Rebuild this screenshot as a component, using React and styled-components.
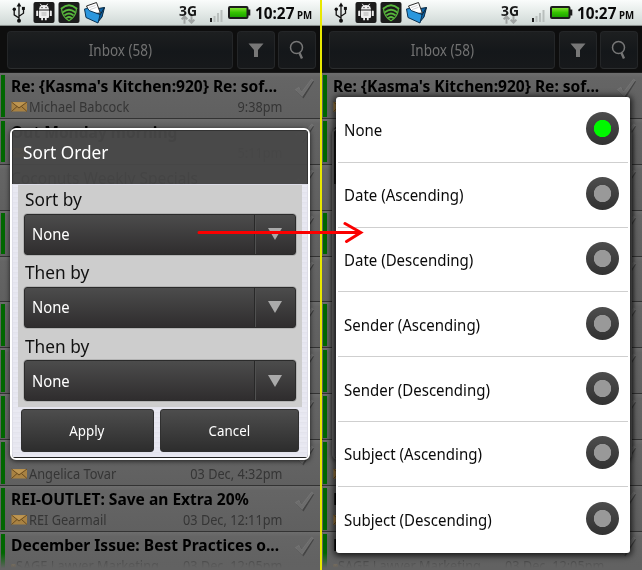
import React from 'react';
import styled, { createGlobalStyle, css } from 'styled-components';

const colors = {
  unread: '#006600',
  yellow: '#e8e800',
  arrow: '#fb0000',
  muted: '#353535',
};

const fonts = {
  droid: `'Noto Sans', 'Open Sans', sans-serif`,
};

const GlobalStyle = createGlobalStyle`
  * {
    box-sizing: border-box;
  }
  body {
    margin: 0;
    background: #000;
    font-family: ${fonts.droid};
    overflow: hidden;
  }
`;

const StyledPage = styled.main`
  position: relative;
  display: grid;
  grid-template-columns: 320px 320px;
  column-gap: 2px;
  width: 642px;
  height: 570px;
  background: ${colors.yellow};
  overflow: hidden;
`;

const StyledPhone = styled.section`
  position: relative;
  display: flex;
  flex-direction: column;
  height: 570px;
  background: #666;
  overflow: hidden;
`;

const Text = styled.span`
  display: block;
  white-space: pre;
  font-size: ${p => p.$size}px;
  line-height: ${p => p.$line || 20}px;
  font-weight: ${p => (p.$bold ? 700 : 400)};
  transform: scaleX(${p => p.$scale || 0.94});
  transform-origin: ${p => p.$origin || 'left'} center;
`;

/* status bar */

const StyledStatusBar = styled.header`
  display: flex;
  justify-content: space-between;
  flex: none;
  height: 26px;
  padding: 0 4px 0 12px;
  background: linear-gradient(#fafcfb 0, #e6ecea 45%, #d0d9d6 94%, #8e9492 98%, #222 100%);
`;

const StyledStatusGroup = styled.div`
  display: flex;
`;

const StyledStatusIcons = styled.div`
  display: flex;
  gap: 3px;
  margin-left: 7px;
`;

const StyledNetwork = styled.div`
  width: 22px;
  margin-right: 9px;
  color: #181818;
`;

const StyledDataArrows = styled.svg`
  display: block;
  margin: -6px 0 0 2px;
`;

const StyledBattery = styled.svg`
  margin-left: 5px;
`;

const StyledClock = styled.div`
  display: grid;
  grid-template-columns: 42px 19px;
  align-items: baseline;
  margin-left: 4px;
  color: #0a0a0a;
`;

const UsbIcon = () => (
  <svg width="14" height="26" viewBox="0 0 14 26" fill="none" stroke="#111" strokeWidth="1.3">
    <path d="M7 5v16M7 18L2.2 14.8V10M7 16.2l4.5-3V9" />
    <path d="M7 2.6l2.4 4H4.6z" fill="#111" stroke="none" />
    <circle cx="7" cy="20.8" r="2" fill="#111" stroke="none" />
    <circle cx="2.3" cy="9.3" r="1.7" fill="#111" stroke="none" />
    <path d="M9.9 6.9h3v3h-3z" fill="#111" stroke="none" />
  </svg>
);

const AndroidIcon = () => (
  <svg width="22" height="26" viewBox="0 0 22 26">
    <rect x=".5" y="2" width="21" height="21" rx="2" fill="#1c1c1c" />
    <path d="M6 9.5a5 4.600 0 0 1 10 0z" fill="#eee" />
    <path d="M7.3 3.800l1.5 2.400M14.700 3.800l-1.500 2.400" stroke="#eee" />
    <path
      d="M6 10.400h10v6.700q0 1-1 1h-1.300v2.200h-1.800v-2.200H10v2.200H8.200v-2.200H7q-1 0-1-1zM3.200 11q1-1 2 0v5h-2zM16.800 11q1-1 2 0v5h-2z"
      fill="#eee"
    />
    <circle cx="9" cy="7.6" r=".7" fill="#222" />
    <circle cx="13" cy="7.6" r=".7" fill="#222" />
    <path d="M8.5 13h5M8.5 15h5" stroke="#999" strokeWidth=".7" />
  </svg>
);

const WifiIcon = () => (
  <svg width="22" height="26" viewBox="0 0 22 26">
    <rect x=".5" y="2" width="21" height="21" rx="2" fill="#1c1c1c" />
    <path
      d="M3.500 8.500Q11 2 18.500 8.500M5.200 12q5.800-4.600 11.600 0M7 15q4-3 8 0M8.800 17.800q2.200-1.600 4.400 0"
      fill="none"
      stroke="#58b83c"
      strokeWidth="1.900"
      strokeLinecap="round"
    />
    <path d="M3.500 8.500q.5 8.500 7.500 12.200 7-3.700 7.500-12.200" fill="none" stroke="#58b83c" strokeWidth="1.200" />
  </svg>
);

const FolderIcon = () => (
  <svg width="24" height="26" viewBox="0 0 24 26" strokeLinejoin="round">
    <path d="M12 9l9.500-1.500L19 17l-4.500 5.500z" fill="#0d64a8" stroke="#06263f" />
    <path d="M3.500 6L13.500 2.500l3.800 10.500-9.800 1z" fill="#fff" stroke="#2a2a2a" />
    <path d="M6 7.600l6.500-2.200M7 9.600l6.500-2.200" stroke="#c4c8cc" strokeWidth=".8" />
    <path d="M1.500 9l3-.5 2 2.200 9 3.300 1.500 1-2 8-12-5.500z" fill="#2b97de" stroke="#083253" />
    <path d="M17 15l4.500-7.500" stroke="#06263f" />
  </svg>
);

const DataArrows = () => (
  <StyledDataArrows width="14" height="9" viewBox="0 0 14 9" fill="none" stroke="#a1a5a4" strokeWidth="2">
    <path d="M3.500 8.800V2M.7 4.300l2.800-3 2.800 3M10.500 0v7M7.700 4.700l2.800 3 2.800-3" />
  </StyledDataArrows>
);

const SignalIcon = () => (
  <svg width="13" height="26" viewBox="0 0 13 26">
    <path d="M0 18h2v4H0z" fill="#222" />
    <path d="M3.500 16h2v6h-2zM7 13h2v9H7zM10.500 10h2v12h-2z" fill="#b9bfbd" />
  </svg>
);

const BatteryIcon = () => (
  <StyledBattery width="23" height="26" viewBox="0 0 23 26">
    <defs>
      <linearGradient id="charge" x2="0" y2="1">
        <stop stopColor="#8fe63c" />
        <stop offset=".5" stopColor="#35c400" />
        <stop offset="1" stopColor="#179a00" />
      </linearGradient>
    </defs>
    <rect x="1" y="7" width="18.500" height="11" rx="1" fill="url(#charge)" stroke="#1c1c1c" strokeWidth="2" />
    <path d="M20 9.500h2.300v6H20z" fill="#1c1c1c" />
  </StyledBattery>
);

const StatusBar = () => (
  <StyledStatusBar>
    <StyledStatusGroup>
      <UsbIcon />
      <StyledStatusIcons>
        <AndroidIcon />
        <WifiIcon />
        <FolderIcon />
      </StyledStatusIcons>
    </StyledStatusGroup>
    <StyledStatusGroup>
      <StyledNetwork>
        <Text $size={15} $line={21} $bold $scale={0.93}>
          3G
        </Text>
        <DataArrows />
      </StyledNetwork>
      <SignalIcon />
      <BatteryIcon />
      <StyledClock>
        <Text $size={16.5} $line={26} $bold $scale={0.93}>
          10:27
        </Text>
        <Text $size={10.5} $line={26} $bold $scale={0.92}>
          PM
        </Text>
      </StyledClock>
    </StyledStatusGroup>
  </StyledStatusBar>
);

/* toolbar */

const StyledToolbar = styled.nav`
  display: grid;
  grid-template-columns: 226px 38px 38px;
  column-gap: 3.5px;
  flex: none;
  height: 47px;
  padding: 5px 0 4px 7px;
  background: #0e0e0e;
  border-bottom: 1px solid #1b1b1b;
`;

const StyledToolButton = styled.button`
  display: flex;
  align-items: center;
  justify-content: center;
  height: 38px;
  padding: 0 0 1px;
  border: 1px solid #242628;
  border-bottom-color: #2b2d2e;
  border-radius: 4px;
  background: linear-gradient(#1d1f20, #14171a 55%, #17191b);
  color: #727272;
  font-family: inherit;
`;

const Toolbar = () => (
  <StyledToolbar>
    <StyledToolButton>
      <Text $size={15.5} $scale={0.87} $origin="center">
        Inbox (58)
      </Text>
    </StyledToolButton>
    <StyledToolButton>
      <svg width="16" height="16" viewBox="0 0 16 16" fill="#777">
        <path d="M.5 1.500h15L10 8v7H6V8z" />
      </svg>
    </StyledToolButton>
    <StyledToolButton>
      <svg width="18" height="20" viewBox="0 0 18 20" fill="none" stroke="#777">
        <circle cx="8.5" cy="7.5" r="6" strokeWidth="1.5" />
        <path d="M11.500 13l2.500 5.500" strokeWidth="2.4" />
      </svg>
    </StyledToolButton>
  </StyledToolbar>
);

/* message list */

const StyledList = styled.ul`
  margin: 0;
  padding: 0;
  list-style: none;
`;

const StyledMessage = styled.li`
  display: grid;
  grid-template-columns: 5px 277px 1fr;
  height: 45.9px;
  padding-top: 1.5px;
  border-bottom: 1px solid #333;
  background: linear-gradient(#6d6d6d, #656565 10%, #606060);
`;

const StyledFlag = styled.div`
  width: 4px;
  height: 41.5px;
  margin: 0.5px 0 0 1px;
  background: ${p => (p.$unread ? colors.unread : 'transparent')};
`;

const StyledBody = styled.div`
  padding: 0.7px 0 0 6px;
`;

const StyledMeta = styled.div`
  display: flex;
  align-items: center;
  height: 20px;
  margin-top: 1px;
  color: ${colors.muted};
`;

const StyledTime = styled.div`
  margin-left: auto;
`;

const StyledCheck = styled.svg`
  margin: 3px 0 0 12px;
`;

const StyledFade = styled.div`
  position: absolute;
  inset: auto 0 0 0;
  height: 17px;
  background: linear-gradient(rgba(98, 98, 98, 0), #626262 90%);
`;

const messages = [
  { subject: "Re: {Kasma's Kitchen:920} Re: sof...", sender: 'Michael Babcock', time: '9:38pm', unread: true },
  { subject: 'Out Monday morning', sender: '', time: '5:11pm', unread: true },
  { subject: 'Coconuts Weekly Specials', sender: '', time: '', unread: false },
  { subject: '', sender: '', time: '', unread: true },
  { subject: '', sender: '', time: '', unread: false },
  { subject: '', sender: '', time: '', unread: true },
  { subject: '', sender: '', time: '', unread: true },
  { subject: '', sender: '', time: '', unread: true },
  { subject: '', sender: 'Angelica Tovar', time: '03 Dec, 4:32pm', unread: true },
  { subject: 'REI-OUTLET: Save an Extra 20%', sender: 'REI Gearmail', time: '03 Dec, 12:11pm', unread: true },
  { subject: 'December Issue: Best Practices o...', sender: 'SAGE Lawyer Marketing', time: '03 Dec, 12:05pm', unread: true },
];

const Envelope = () => (
  <svg width="18" height="12" viewBox="0 0 18 12">
    <path d="M.5 1h15.500v9.500H.5z" fill="#a98242" />
    <path d="M.5 1L8 7l8-6M.5 10.500L6 5.500M16 10.500L10.500 5.500" fill="none" stroke="#62451c" strokeWidth=".9" />
    <path d="M1.500 1.200L8 6l6.500-4.800z" fill="#be9652" />
  </svg>
);

const Check = () => (
  <StyledCheck width="22" height="24" viewBox="0 0 22 24" strokeLinejoin="round">
    <path d="M2.500 13l4-2.500 1.500 3.500L18 2.500l2 1L9.500 20.500z" fill="#444" />
    <path d="M1.500 11.500l3.500-2 2.800 4.500L17.500 1.200l1.700 1L8.200 18.500z" fill="#6c6c6c" stroke="#7c7c7c" strokeWidth=".6" />
  </StyledCheck>
);

const MessageList = () => (
  <StyledList>
    {messages.map((m, i) => (
      <StyledMessage key={i}>
        <StyledFlag $unread={m.unread} />
        <StyledBody>
          <Text $size={16.5} $line={21} $bold={m.unread} $scale={0.943}>
            {m.subject || ' '}
          </Text>
          <StyledMeta>
            <Envelope />
            <Text $size={14} $scale={0.915}>
              {m.sender}
            </Text>
            <StyledTime>
              <Text $size={14} $scale={0.908} $origin="right">
                {m.time}
              </Text>
            </StyledTime>
          </StyledMeta>
        </StyledBody>
        <Check />
      </StyledMessage>
    ))}
  </StyledList>
);

/* sort dialog */

const StyledDialog = styled.div`
  position: absolute;
  left: 10px;
  top: 128px;
  width: 300px;
  height: 332px;
  display: flex;
  flex-direction: column;
  border: 2px solid #fff;
  border-radius: 6px;
  box-shadow: 0 1px 5px rgba(0, 0, 0, 0.7);
  overflow: hidden;
  ${p =>
    p.$dimmed &&
    css`
      filter: brightness(0.38);
    `};
`;

const StyledDialogTitle = styled.div`
  height: 54px;
  padding: 10px 0 0 10px;
  border: 1px solid #333;
  border-bottom: 0;
  background: rgba(72, 72, 72, 0.95);
  color: #fff;
`;

const StyledDialogBody = styled.div`
  flex: 1;
  padding: 0 5.5px;
  border: solid #dcdce6;
  border-width: 1px 1px 0;
  background: repeating-linear-gradient(#e9e9f2 0 2px, #e3e3ec 2px 3px, #e6e6f0 3px 5px);
  border-bottom: 1px solid #222;
`;

const StyledFields = styled.div`
  height: 222px;
  margin: 0 0 0 -1px;
  padding: 2px 6px 0;
  background: #cdcdcd;
  color: #111;
`;

const StyledField = styled.div`
  height: 73.4px;
`;

const StyledFieldLabel = styled.div`
  padding-left: 1.5px;
`;

const StyledSelect = styled.div`
  display: grid;
  grid-template-columns: 1fr 41px;
  align-items: center;
  height: 41px;
  margin-top: 2.5px;
  padding-left: 7px;
  border: 1px solid #2b2b2b;
  border-radius: 3px;
  background: linear-gradient(#4c4c4c, #2f2d2e);
  box-shadow: 0 0 0 0.5px #999;
  color: #fff;
`;

const StyledSelectArrow = styled.div`
  display: flex;
  align-items: center;
  justify-content: center;
  height: 39px;
  border-left: 1px solid #282828;
  box-shadow: inset 1px 0 #505050;
`;

const StyledActions = styled.div`
  display: grid;
  grid-template-columns: 133px 139px;
  column-gap: 6px;
  padding: 2px 0 0 2px;
`;

const StyledAction = styled.button`
  display: flex;
  align-items: center;
  justify-content: center;
  height: 43px;
  padding: 0 0 2px;
  border: 1px solid #303030;
  border-radius: 3px;
  background: linear-gradient(#4d4d4d, #2d2d2d);
  color: #fff;
  font-family: inherit;
`;

const SortDialog = () => (
  <StyledDialog>
    <StyledDialogTitle>
      <Text $size={18} $line={22} $scale={0.957}>
        Sort Order
      </Text>
    </StyledDialogTitle>
    <StyledDialogBody>
      <StyledFields>
        {['Sort by', 'Then by', 'Then by'].map((label, i) => (
          <StyledField key={i}>
            <StyledFieldLabel>
              <Text $size={18} $line={24} $scale={0.96}>
                {label}
              </Text>
            </StyledFieldLabel>
            <StyledSelect>
              <Text $size={15.5} $scale={0.955}>
                None
              </Text>
              <StyledSelectArrow>
                <svg width="14" height="12" viewBox="0 0 14 12" fill="#aaa">
                  <path d="M0 0h14L7 12z" />
                </svg>
              </StyledSelectArrow>
            </StyledSelect>
          </StyledField>
        ))}
      </StyledFields>
      <StyledActions>
        {['Apply', 'Cancel'].map(label => (
          <StyledAction key={label}>
            <Text $size={15} $scale={0.89} $origin="center">
              {label}
            </Text>
          </StyledAction>
        ))}
      </StyledActions>
    </StyledDialogBody>
  </StyledDialog>
);

// only the frame stays visible once the popup opens over it
const DimmedDialog = () => (
  <StyledDialog $dimmed>
    <StyledDialogTitle />
    <StyledDialogBody />
  </StyledDialog>
);

/* option popup */

const StyledOptions = styled.div`
  position: absolute;
  left: 14px;
  top: 97px;
  width: 294px;
  height: 456px;
  padding: 1px 2px;
  border-radius: 3px;
  background: #fff;
  box-shadow: 0 1px 6px 2px rgba(0, 0, 0, 0.75);
`;

const StyledOption = styled.div`
  display: flex;
  align-items: center;
  justify-content: space-between;
  height: 64.8px;
  padding: 1px 9px 0 6px;
  border-bottom: 1px solid #cfcfcf;
  color: #0a0a0a;
  &:last-child {
    border-bottom: 0;
  }
`;

const StyledRadio = styled.div`
  width: 33px;
  height: 33px;
  margin-bottom: 3px;
  border-radius: 50%;
  background:
    radial-gradient(circle, ${p => (p.$on ? '#00f800' : '#999')} 8.3px, transparent 9px),
    linear-gradient(#4d4d4d, #323232);
`;

const options = [
  'None',
  'Date (Ascending)',
  'Date (Descending)',
  'Sender (Ascending)',
  'Sender (Descending)',
  'Subject (Ascending)',
  'Subject (Descending)',
];

const OptionPopup = () => (
  <StyledOptions>
    {options.map((option, i) => (
      <StyledOption key={option}>
        <Text $size={16} $line={22} $scale={0.938}>
          {option}
        </Text>
        <StyledRadio $on={i === 0} />
      </StyledOption>
    ))}
  </StyledOptions>
);

const StyledArrow = styled.svg`
  position: absolute;
  left: 196px;
  top: 220px;
`;

const Phone = ({ children }) => (
  <StyledPhone>
    <StatusBar />
    <Toolbar />
    <MessageList />
    <StyledFade />
    {children}
  </StyledPhone>
);

const App = () => (
  <>
    <GlobalStyle />
    <StyledPage>
      <Phone>
        <SortDialog />
      </Phone>
      <Phone>
        <DimmedDialog />
        <OptionPopup />
      </Phone>
      <StyledArrow width="170" height="26" viewBox="0 0 170 26" fill="none" stroke={colors.arrow} strokeWidth="3" strokeLinecap="round">
        <path d="M3 12.500h161M149 3.500L164.800 12.500 150.500 21.500" />
      </StyledArrow>
    </StyledPage>
  </>
);

export default App;
